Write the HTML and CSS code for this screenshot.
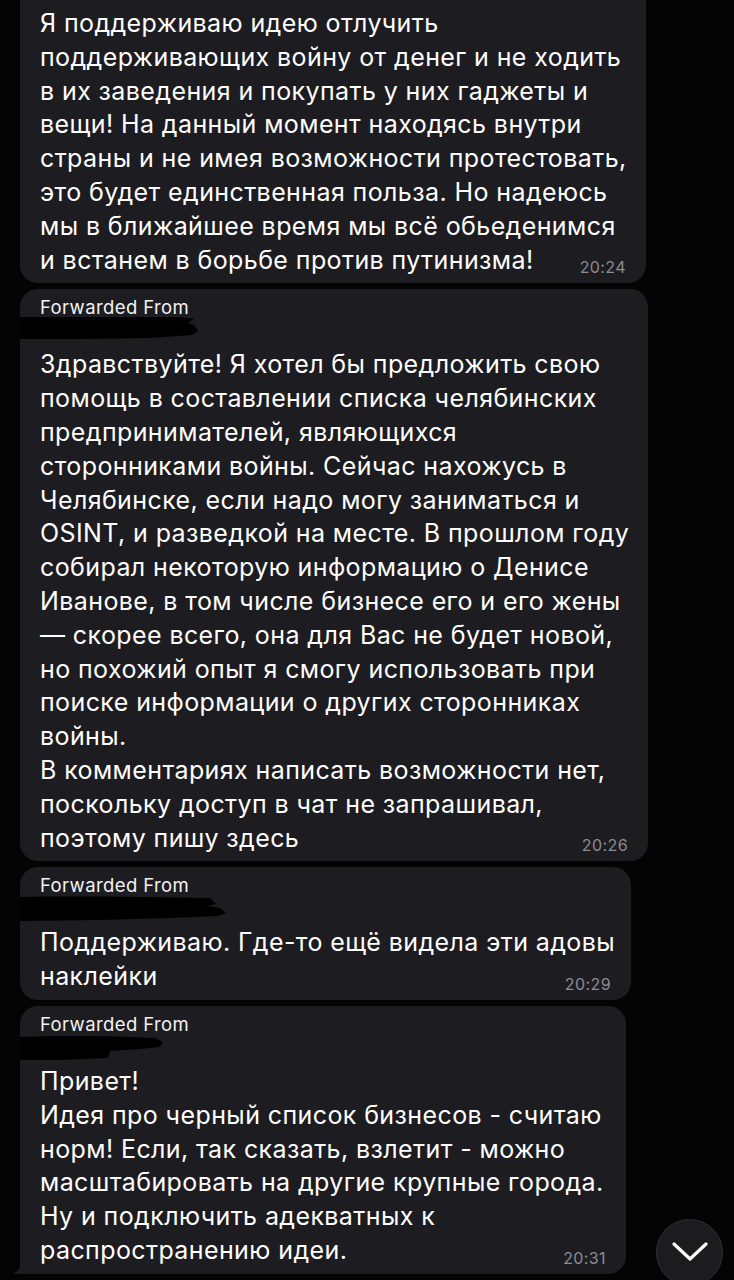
FILE: index.html
```html
<!DOCTYPE html>
<html lang="ru">
<head>
<meta charset="utf-8">
<title>Chat</title>
<link rel="stylesheet" href="styles.css">
</head>
<body>
<div class="chat">
  <div class="bubble first" style="width:626px">
    <div class="text">Я поддерживаю идею отлучить<br>поддерживающих войну от денег и не ходить<br>в их заведения и покупать у них гаджеты и<br>вещи! На данный момент находясь внутри<br>страны и не имея возможности протестовать,<br>это будет единственная польза. Но надеюсь<br>мы в ближайшее время мы всё обьеденимся<br>и встанем в борьбе против путинизма!</div>
    <span class="time">20:24</span>
  </div>

  <div class="bubble" style="width:628px">
    <div class="fwd">Forwarded From</div>
    <div class="redact"><svg width="220" height="31" viewBox="0 0 220 31"><path d="M0 0 C40 -1 110 0 160 0 L174 2 L168 6 L174 8 L178 14 L172 18 L130 21 L60 22 L0 22 Z" fill="#000"/></svg></div>
    <div class="text">Здравствуйте! Я хотел бы предложить свою<br>помощь в составлении списка челябинских<br>предпринимателей, являющихся<br>сторонниками войны. Сейчас нахожусь в<br>Челябинске, если надо могу заниматься и<br>OSINT, и разведкой на месте. В прошлом году<br>собирал некоторую информацию о Денисе<br>Иванове, в том числе бизнесе его и его жены<br>— скорее всего, она для Вас не будет новой,<br>но похожий опыт я смогу использовать при<br>поиске информации о других сторонниках<br>войны.<br>В комментариях написать возможности нет,<br>поскольку доступ в чат не запрашивал,<br>поэтому пишу здесь</div>
    <span class="time">20:26</span>
  </div>

  <div class="bubble" style="width:611px">
    <div class="fwd">Forwarded From</div>
    <div class="redact"><svg width="240" height="31" viewBox="0 0 240 31"><path d="M0 2 C50 1 130 2 190 3 L196 9 L188 11 L200 13 L206 18 L198 21 L150 23 L80 25 L0 26 Z" fill="#000"/></svg></div>
    <div class="text">Поддерживаю. Где-то ещё видела эти адовы<br>наклейки</div>
    <span class="time">20:29</span>
  </div>

  <div class="bubble last" style="width:606px">
    <div class="fwd">Forwarded From</div>
    <div class="redact"><svg width="200" height="31" viewBox="0 0 200 31"><path d="M0 3 C40 1 100 2 135 4 L143 8 L140 13 L120 15 L90 17 L88 24 L40 26 L0 26 Z" fill="#000"/></svg></div>
    <div class="text">Привет!<br>Идея про черный список бизнесов - считаю<br>норм! Если, так сказать, взлетит - можно<br>масштабировать на другие крупные города.<br>Ну и подключить адекватных к<br>распространению идеи.</div>
    <span class="time">20:31</span>
  </div>
</div>

<button class="scroll-down" aria-label="Scroll down">
  <svg width="36" height="20" viewBox="0 0 36 20"><path d="M2 2 L18 17 L34 2" fill="none" stroke="#fff" stroke-width="3.2" stroke-linecap="round" stroke-linejoin="round"/></svg>
</button>
</body>
</html>
```

FILE: styles.css
```css
html, body {
  margin: 0;
  padding: 0;
  background: #040404;
  height: 1280px;
  overflow: hidden;
}

body {
  font-family: Inter, "Noto Sans", sans-serif;
  color: #fff;
  position: relative;
}

.chat {
  display: flex;
  flex-direction: column;
  align-items: flex-start;
  gap: 6px;
  padding-left: 20px;
  margin-top: -30px;
}

.bubble {
  position: relative;
  box-sizing: border-box;
  background: #1d1c20;
  border-radius: 18px;
  padding: 8px 20px 6px 20px;
}

.bubble.first {
  padding-top: 37px;
}

.bubble.last {
  border-bottom-left-radius: 6px;
}

.bubble.last::before {
  content: "";
  position: absolute;
  left: -8px;
  bottom: 0;
  width: 16px;
  height: 16px;
  background: #1d1c20;
  clip-path: path("M16 0 L16 16 L0 16 C6 14 10 10 10 0 Z");
}

.fwd {
  font-size: 18.5px;
  line-height: 20px;
  letter-spacing: 0.4px;
  color: #f2f2f2;
}

.redact {
  height: 31px;
  margin-left: -20px;
}

.redact svg {
  display: block;
}

.text {
  font-size: 25px;
  line-height: 33.8px;
  letter-spacing: 0.4px;
  white-space: nowrap;
}

.time {
  position: absolute;
  right: 20px;
  bottom: 7px;
  font-size: 16px;
  line-height: 18px;
  letter-spacing: 0.4px;
  color: #8c8c91;
}

.scroll-down {
  position: absolute;
  left: 656px;
  top: 1219px;
  width: 67px;
  height: 67px;
  border-radius: 50%;
  background: #1c1c1e;
  border: 1px solid #303032;
  padding: 0;
  display: flex;
  align-items: center;
  justify-content: center;
}

.scroll-down svg {
  margin-top: -2px;
}
```
